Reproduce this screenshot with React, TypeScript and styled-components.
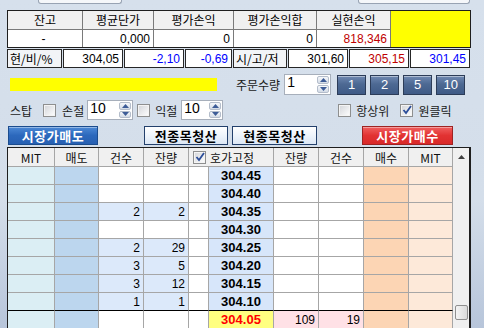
import React from "react";
import styled, { createGlobalStyle } from "styled-components";

const GlobalStyle = createGlobalStyle`
  html, body { margin: 0; padding: 0; }
  body {
    background: #D5DFEB;
    font-family: "Liberation Sans", "Noto Sans CJK KR", sans-serif;
    font-size: 12px;
    color: #000;
  }
  * { box-sizing: border-box; }
`;

const Page = styled.div`
  width: 484px;
  height: 328px;
  overflow: hidden;
  background: linear-gradient(#D6E0EC 0, #D4DEEA 200px, #B7C5DA 328px);
`;

const TopStrip = styled.div`
  display: flex;
  height: 4px;
`;

const ClipBox = styled.div<{ $left: number; $width: number }>`
  margin-left: ${p => p.$left}px;
  width: ${p => p.$width}px;
  height: 4px;
  background: #F5F7FA;
  border: 1px solid #98A3B3;
  border-top: none;
  border-radius: 0 0 3px 3px;
`;

const Summary = styled.div`
  margin: 6px 0 0 7px;
  width: 464px;
  display: grid;
  grid-template-columns: 74px 70px 79px 82px 73px 1fr;
  grid-template-rows: 18px 17px;
  gap: 1px;
  background: #7A7A7A;
  border: 1px solid #1E1E1E;
`;

const HeadCell = styled.div`
  background: #F0F0F0;
  display: flex;
  align-items: center;
  justify-content: center;
  font-family: "Noto Sans CJK KR", sans-serif;
  font-size: 12px;
  line-height: 1;
`;

const ValueCell = styled.div<{ $color?: string; $center?: boolean }>`
  background: #fff;
  display: flex;
  align-items: center;
  justify-content: ${p => (p.$center ? "center" : "flex-end")};
  padding-right: 3px;
  color: ${p => p.$color || "#000"};
  font-size: 12px;
`;

const YellowCell = styled.div`
  grid-column: 6;
  grid-row: 1 / span 2;
  background: #FFFF00;
`;

const QuoteRow = styled.div`
  margin: 1px 0 0 7px;
  display: flex;
  gap: 1px;
  height: 19px;
`;

const QuoteCell = styled.div<{ $w: number; $label?: boolean; $color?: string }>`
  width: ${p => p.$w}px;
  height: 19px;
  border: 1px solid #262626;
  background: ${p => (p.$label ? "#F2F4F7" : "#fff")};
  display: flex;
  align-items: center;
  justify-content: ${p => (p.$label ? "flex-start" : "flex-end")};
  padding: ${p => (p.$label ? "0 0 0 2px" : "0 3px 0 0")};
  color: ${p => p.$color || "#000"};
  font-family: ${p => (p.$label ? `"Noto Sans CJK KR", sans-serif` : `"Liberation Sans", sans-serif`)};
  font-size: 12px;
`;

const ControlRow = styled.div<{ $top: number; $h: number }>`
  display: flex;
  align-items: center;
  margin-top: ${p => p.$top}px;
  height: ${p => p.$h}px;
`;

const YellowBar = styled.div`
  margin-left: 10px;
  width: 207px;
  height: 13px;
  background: #FFFF00;
`;

const Label = styled.span<{ $ml: number }>`
  margin-left: ${p => p.$ml}px;
  font-family: "Noto Sans CJK KR", sans-serif;
  font-size: 12px;
  color: #1A1A1A;
  white-space: nowrap;
`;

const SpinBox = styled.div<{ $ml: number; $w: number; $h: number }>`
  margin-left: ${p => p.$ml}px;
  width: ${p => p.$w}px;
  height: ${p => p.$h}px;
  display: flex;
  background: #fff;
  border: 1px solid #A7AFBB;
`;

const SpinText = styled.div`
  flex: 1;
  padding: 0 0 0 2px;
  font-size: 14px;
  line-height: 15px;
`;

const SpinButtons = styled.div`
  width: 13px;
  display: flex;
  flex-direction: column;
  gap: 1px;
  padding: 1px 1px 1px 0;
`;

const SpinButton = styled.div`
  flex: 1;
  display: flex;
  align-items: center;
  justify-content: center;
  background: linear-gradient(#F6F8FB, #D3DBE6);
  border: 1px solid #B4BDCB;
  border-radius: 2px;
`;

const QtyButtons = styled.div`
  display: flex;
  gap: 4px;
  margin-left: 6px;
`;

const QtyButton = styled.button`
  width: 29px;
  height: 20px;
  padding: 0;
  border: 1px solid #2C3C58;
  background: linear-gradient(#7089B2, #4D6993 45%, #3F5A86);
  box-shadow: inset 0 1px 0 rgba(255, 255, 255, 0.45);
  color: #fff;
  font-family: "Liberation Sans", sans-serif;
  font-size: 13px;
`;

const Check = styled.div<{ $ml: number }>`
  margin-left: ${p => p.$ml}px;
  width: 13px;
  height: 13px;
  flex-shrink: 0;
  border: 1px solid #8E8F8F;
  background: linear-gradient(135deg, #D2D4D8, #FFFFFF);
  box-shadow: inset 0 0 0 1px #F4F4F4;
  display: flex;
  align-items: center;
  justify-content: center;
`;

const ActionButton = styled.button<{ $ml: number; $w: number; $kind: "sell" | "buy" | "plain" }>`
  margin-left: ${p => p.$ml}px;
  width: ${p => p.$w}px;
  height: 19px;
  padding: 0;
  font-family: "Noto Sans CJK KR", sans-serif;
  font-weight: 700;
  font-size: 13px;
  line-height: 1;
  letter-spacing: 0.5px;
  color: ${p => (p.$kind === "plain" ? "#000" : "#fff")};
  border: 1px solid ${p => (p.$kind === "sell" ? "#1B4C8E" : p.$kind === "buy" ? "#9E2323" : "#23406C")};
  background: ${p =>
    p.$kind === "sell"
      ? "linear-gradient(#4C89D6, #2C68BC 50%, #2760B2)"
      : p.$kind === "buy"
      ? "linear-gradient(#F06060, #E23232 50%, #D92A2A)"
      : "linear-gradient(#FFFFFF, #EEF4FB 50%, #DCE7F5)"};
  box-shadow: inset 0 1px 0 rgba(255, 255, 255, 0.4);
`;

const TableWrap = styled.div`
  margin: 2px 0 0 7px;
  width: 464px;
  height: 200px;
  display: flex;
  border: 1px solid #1E1E1E;
  border-bottom: none;
  background: #fff;
`;

const Grid = styled.div`
  width: 445px;
  display: grid;
  grid-template-columns: 47px 44px 45px 45px 20px 65px 45px 45px 45px 44px;
  grid-auto-rows: 18px;
  grid-template-rows: 19px;
`;

const HeaderCell = styled.div<{ $span?: number }>`
  grid-column: span ${p => p.$span || 1};
  background: #F0F0F0;
  border-right: 1px solid #A6A6A6;
  border-bottom: 1px solid #A6A6A6;
  display: flex;
  align-items: center;
  justify-content: ${p => (p.$span ? "flex-start" : "center")};
  padding-left: ${p => (p.$span ? "4px" : "0")};
  gap: 4px;
  font-family: "Noto Sans CJK KR", sans-serif;
  font-size: 12px;
  color: #111;
`;

const Cell = styled.div<{ $bg: string; $line?: string; $price?: boolean; $red?: boolean }>`
  background: ${p => p.$bg};
  border-right: 1px solid #A6A6A6;
  border-bottom: 1px solid ${p => p.$line || "#A6A6A6"};
  display: flex;
  align-items: center;
  justify-content: ${p => (p.$price ? "center" : "flex-end")};
  padding-right: ${p => (p.$price ? "0" : "3px")};
  font-family: "Liberation Sans", sans-serif;
  font-size: ${p => (p.$price ? "13px" : "12px")};
  font-weight: ${p => (p.$price ? 700 : 400)};
  color: ${p => (p.$red ? "#FF0000" : "#000")};
`;

const ScrollBar = styled.div`
  width: 17px;
  display: flex;
  flex-direction: column;
  background: #F0F0F0;
  border-right: 1px solid #1E1E1E;
`;

const ScrollArrow = styled.div`
  height: 17px;
  display: flex;
  align-items: center;
  justify-content: center;
`;

const ScrollTrack = styled.div`
  flex: 1;
`;

const ScrollThumb = styled.div`
  height: 15px;
  margin: 0 1px 27px 2px;
  border: 1px solid #8F8F8F;
  border-radius: 2px;
  background: linear-gradient(90deg, #F4F4F4, #DADADA);
`;

const Tri: React.FC<{ up?: boolean }> = ({ up }) => (
  <svg width="7" height="4" viewBox="0 0 7 4">
    <path d={up ? "M0 4 L3.5 0 L7 4 Z" : "M0 0 L3.5 4 L7 0 Z"} fill="#3D5C97" />
  </svg>
);

const Spinner: React.FC<{ ml: number; w: number; h: number; value: string }> = ({ ml, w, h, value }) => (
  <SpinBox $ml={ml} $w={w} $h={h}>
    <SpinText>{value}</SpinText>
    <SpinButtons>
      <SpinButton><Tri up /></SpinButton>
      <SpinButton><Tri /></SpinButton>
    </SpinButtons>
  </SpinBox>
);

const CheckMark = () => (
  <svg width="10" height="10" viewBox="0 0 10 10">
    <path d="M1.5 5 L4 8 L9 1" stroke="#2B4D99" strokeWidth="1.8" fill="none" />
  </svg>
);

const Checkbox: React.FC<{ ml: number; checked?: boolean }> = ({ ml, checked }) => (
  <Check $ml={ml}>{checked && <CheckMark />}</Check>
);

interface Level {
  price: string;
  count?: string;
  qty?: string;
}

const levels: Level[] = [
  { price: "304.45" },
  { price: "304.40" },
  { price: "304.35", count: "2", qty: "2" },
  { price: "304.30" },
  { price: "304.25", count: "2", qty: "29" },
  { price: "304.20", count: "3", qty: "5" },
  { price: "304.15", count: "3", qty: "12" },
  { price: "304.10", count: "1", qty: "1" },
];

const colors = {
  mitSell: "#DBEEF4",
  sell: "#BCD6EE",
  sellFilled: "#DCE9FA",
  price: "#D7E6FA",
  buy: "#FCD5B4",
  mitBuy: "#FDE9D9",
  current: "#FFFF80",
  pink: "#FFE1E6",
};

const SellRow: React.FC<{ level: Level; last: boolean }> = ({ level, last }) => {
  const line = last ? "#000" : undefined;
  const side = level.count ? colors.sellFilled : "#fff";
  return (
    <>
      <Cell $bg={colors.mitSell} $line={line} />
      <Cell $bg={colors.sell} $line={line} />
      <Cell $bg={side} $line={line}>{level.count}</Cell>
      <Cell $bg={side} $line={line}>{level.qty}</Cell>
      <Cell $bg="#fff" $line={line} />
      <Cell $bg={colors.price} $line={line} $price>{level.price}</Cell>
      <Cell $bg="#fff" $line={line} />
      <Cell $bg="#fff" $line={line} />
      <Cell $bg={colors.buy} $line={line} />
      <Cell $bg={colors.mitBuy} $line={line} />
    </>
  );
};

const summaryHead = ["잔고", "평균단가", "평가손익", "평가손익합", "실현손익"];

export default function App() {
  return (
    <Page>
      <GlobalStyle />
      <TopStrip>
        <ClipBox $left={38} $width={84} />
        <ClipBox $left={236} $width={112} />
      </TopStrip>

      <Summary>
        {summaryHead.map(h => (
          <HeadCell key={h}>{h}</HeadCell>
        ))}
        <YellowCell />
        <ValueCell $center>-</ValueCell>
        <ValueCell>0,000</ValueCell>
        <ValueCell>0</ValueCell>
        <ValueCell>0</ValueCell>
        <ValueCell $color="#C00000">818,346</ValueCell>
      </Summary>

      <QuoteRow>
        <QuoteCell $w={55} $label>현/비/%</QuoteCell>
        <QuoteCell $w={60}>304,05</QuoteCell>
        <QuoteCell $w={60} $color="#0000FF">-2,10</QuoteCell>
        <QuoteCell $w={47} $color="#0000FF">-0,69</QuoteCell>
        <QuoteCell $w={54} $label>시/고/저</QuoteCell>
        <QuoteCell $w={60}>301,60</QuoteCell>
        <QuoteCell $w={60} $color="#C00000">305,15</QuoteCell>
        <QuoteCell $w={60} $color="#0000FF">301,45</QuoteCell>
      </QuoteRow>

      <ControlRow $top={6} $h={21}>
        <YellowBar />
        <Label $ml={19}>주문수량</Label>
        <Spinner ml={4} w={47} h={21} value="1" />
        <QtyButtons>
          {["1", "2", "5", "10"].map(v => (
            <QtyButton key={v}>{v}</QtyButton>
          ))}
        </QtyButtons>
      </ControlRow>

      <ControlRow $top={5} $h={20}>
        <Label $ml={10}>스탑</Label>
        <Checkbox ml={11} />
        <Label $ml={6}>손절</Label>
        <Spinner ml={3} w={46} h={20} value="10" />
        <Checkbox ml={4} />
        <Label $ml={5}>익절</Label>
        <Spinner ml={4} w={42} h={20} value="10" />
        <Checkbox ml={115} />
        <Label $ml={5}>항상위</Label>
        <Checkbox ml={11} checked />
        <Label $ml={5}>원클릭</Label>
      </ControlRow>

      <ControlRow $top={6} $h={19}>
        <ActionButton $ml={8} $w={90} $kind="sell">시장가매도</ActionButton>
        <ActionButton $ml={46} $w={84} $kind="plain">전종목청산</ActionButton>
        <ActionButton $ml={4} $w={85} $kind="plain">현종목청산</ActionButton>
        <ActionButton $ml={45} $w={91} $kind="buy">시장가매수</ActionButton>
      </ControlRow>

      <TableWrap>
        <Grid>
          <HeaderCell>MIT</HeaderCell>
          <HeaderCell>매도</HeaderCell>
          <HeaderCell>건수</HeaderCell>
          <HeaderCell>잔량</HeaderCell>
          <HeaderCell $span={2}>
            <Checkbox ml={0} checked />
            호가고정
          </HeaderCell>
          <HeaderCell>잔량</HeaderCell>
          <HeaderCell>건수</HeaderCell>
          <HeaderCell>매수</HeaderCell>
          <HeaderCell>MIT</HeaderCell>

          {levels.map((lv, i) => (
            <SellRow key={lv.price} level={lv} last={i === levels.length - 1} />
          ))}

          <Cell $bg={colors.mitSell} />
          <Cell $bg={colors.sell} />
          <Cell $bg="#fff" />
          <Cell $bg="#fff" />
          <Cell $bg="#fff" />
          <Cell $bg={colors.current} $price $red>304.05</Cell>
          <Cell $bg={colors.pink}>109</Cell>
          <Cell $bg={colors.pink}>19</Cell>
          <Cell $bg={colors.buy} />
          <Cell $bg={colors.mitBuy} />
        </Grid>
        <ScrollBar>
          <ScrollArrow>
            <svg width="7" height="4" viewBox="0 0 7 4">
              <path d="M0 4 L3.5 0 L7 4 Z" fill="#404040" />
            </svg>
          </ScrollArrow>
          <ScrollTrack />
          <ScrollThumb />
        </ScrollBar>
      </TableWrap>
    </Page>
  );
}
